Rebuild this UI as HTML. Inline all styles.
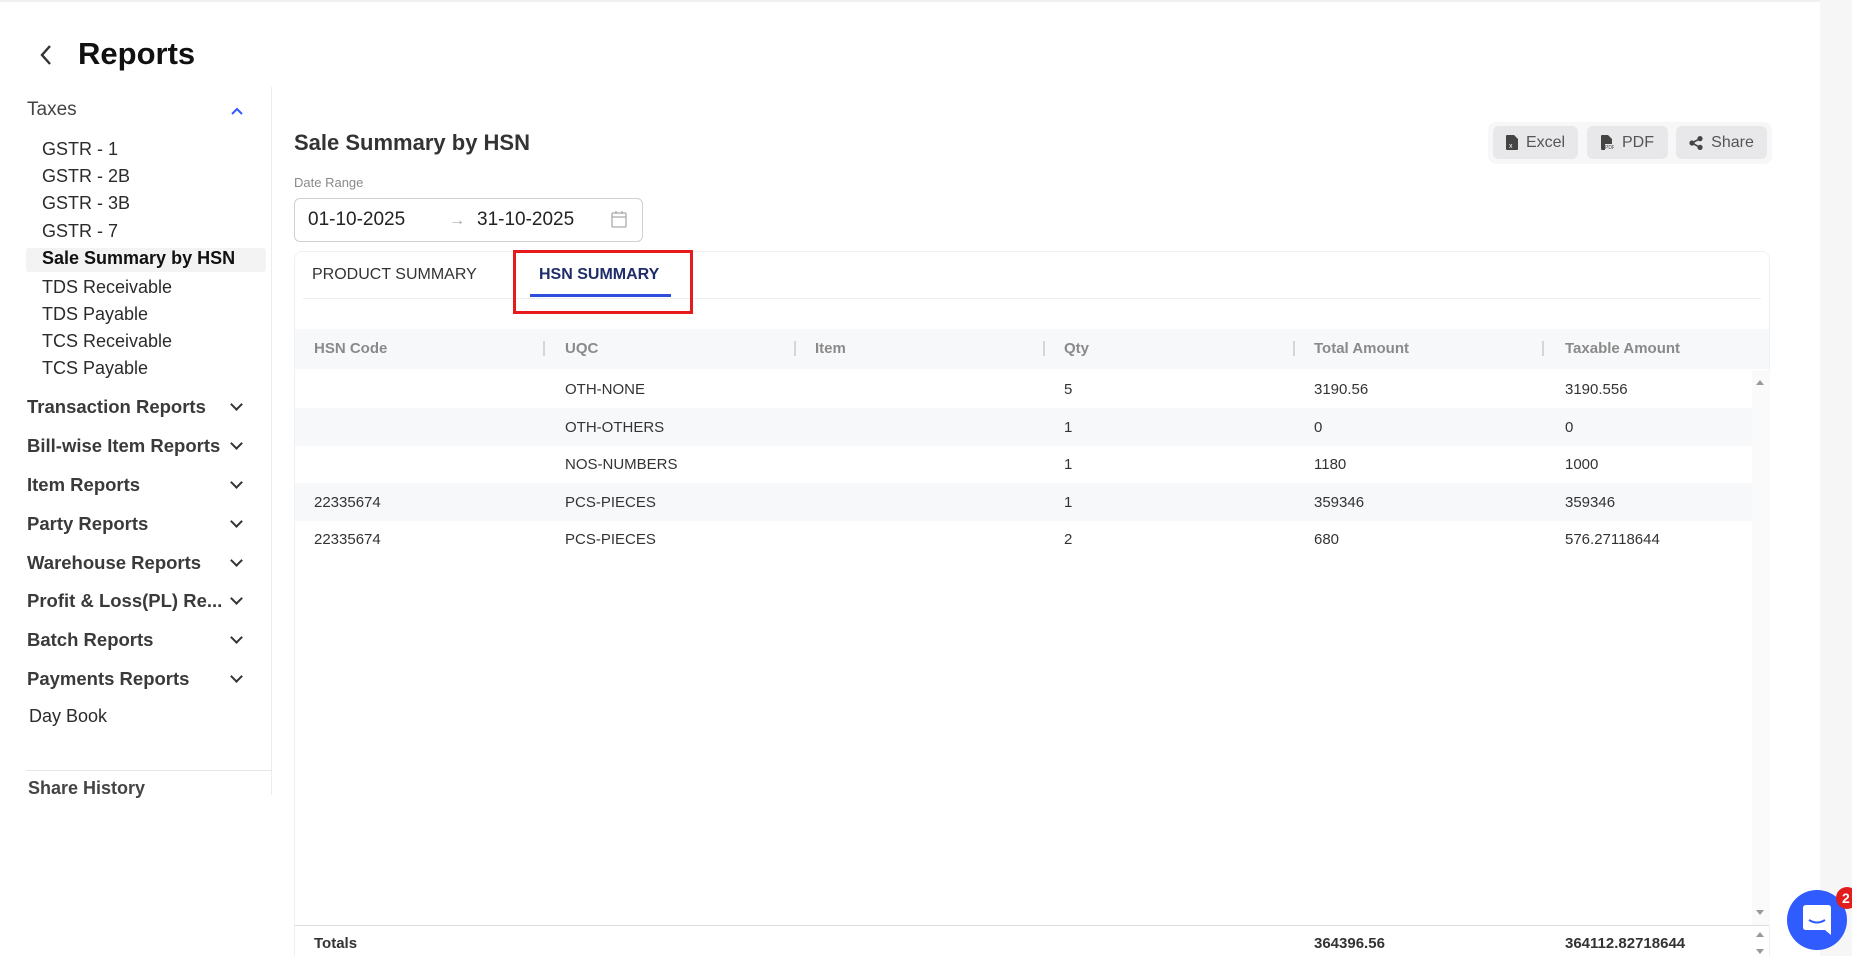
<!DOCTYPE html>
<html style="overflow:hidden;height:956px"><head><meta charset="utf-8"><style>
*{box-sizing:border-box;margin:0;padding:0}
body{width:1852px;height:956px;overflow:hidden;background:#f6f6f7;font-family:"Liberation Sans",sans-serif;color:#333;position:relative}
.page{position:absolute;left:0;top:0;width:1820px;height:956px;background:#fff;border-top:2px solid #f0f0f2;overflow:hidden}
.a{position:absolute;white-space:nowrap}
.sub{font-size:18px;color:#2b2b2b;left:42px}
.grp{font-size:18.5px;font-weight:bold;color:#3a3a3a;left:27px}
.chev{position:absolute;left:232px;width:9px;height:9px;border-right:2px solid #333;border-bottom:2px solid #333;transform:rotate(45deg)}
.th{font-size:15px;font-weight:bold;color:#8a8a8a;top:338px}
.sep{position:absolute;top:339px;width:2px;height:15px;background:#d6d6d6}
.td{font-size:15px;color:#333}
.btn{position:absolute;top:124px;height:33px;background:#e8e8eb;border-radius:6px;font-size:16px;color:#555;display:flex;align-items:center;justify-content:center;gap:8px}
</style></head><body>
<div class="page">
<svg class="a" style="left:38px;top:42px" width="16" height="22" viewBox="0 0 16 22"><path d="M12 2 L4 11 L12 20" fill="none" stroke="#333" stroke-width="2.4"/></svg>
<div class="a" style="left:78px;top:34px;font-size:31px;font-weight:bold;color:#111">Reports</div>

<div class="a" style="left:27px;top:97px;font-size:19px;color:#444">Taxes</div>
<svg class="a" style="left:230px;top:104px" width="14" height="10" viewBox="0 0 14 10"><path d="M2 8 L7 3 L12 8" fill="none" stroke="#2f5bff" stroke-width="2"/></svg>
<div class="a sub" style="top:137px">GSTR - 1</div>
<div class="a sub" style="top:164px">GSTR - 2B</div>
<div class="a sub" style="top:191px">GSTR - 3B</div>
<div class="a sub" style="top:219px">GSTR - 7</div>
<div class="a" style="left:26px;top:246px;width:240px;height:24px;background:#f3f3f4;border-radius:3px"></div>
<div class="a sub" style="top:246px;font-weight:bold;color:#111">Sale Summary by HSN</div>
<div class="a sub" style="top:275px">TDS Receivable</div>
<div class="a sub" style="top:302px">TDS Payable</div>
<div class="a sub" style="top:329px">TCS Receivable</div>
<div class="a sub" style="top:356px">TCS Payable</div>
<div class="a grp" style="top:394px">Transaction Reports</div><div class="chev" style="top:398px"></div>
<div class="a grp" style="top:433px">Bill-wise Item Reports</div><div class="chev" style="top:437px"></div>
<div class="a grp" style="top:472px">Item Reports</div><div class="chev" style="top:476px"></div>
<div class="a grp" style="top:511px">Party Reports</div><div class="chev" style="top:515px"></div>
<div class="a grp" style="top:550px">Warehouse Reports</div><div class="chev" style="top:554px"></div>
<div class="a grp" style="top:588px">Profit &amp; Loss(PL) Re...</div><div class="chev" style="top:592px"></div>
<div class="a grp" style="top:627px">Batch Reports</div><div class="chev" style="top:631px"></div>
<div class="a grp" style="top:666px">Payments Reports</div><div class="chev" style="top:670px"></div>
<div class="a" style="left:29px;top:704px;font-size:18px;color:#2b2b2b">Day Book</div>
<div class="a" style="left:271px;top:85px;width:1px;height:708px;background:#ececec"></div>
<div class="a" style="left:26px;top:768px;width:246px;height:1px;background:#e6e6e6"></div>
<div class="a" style="left:28px;top:776px;font-size:18px;font-weight:bold;color:#444">Share History</div>

<div class="a" style="left:294px;top:128px;font-size:22px;font-weight:bold;color:#333">Sale Summary by HSN</div>
<div class="a" style="left:1488px;top:120px;width:284px;height:42px;background:#f7f7f8;border-radius:8px"></div>
<div class="btn" style="left:1493px;width:85px"><svg width="12" height="15" viewBox="0 0 12 15"><path d="M0 1 Q0 0 1 0 H8 L12 4 V14 Q12 15 11 15 H1 Q0 15 0 14Z" fill="#444"/><text x="3" y="13" font-size="7" fill="#fff" font-family="Liberation Sans">x</text></svg>Excel</div>
<div class="btn" style="left:1587px;width:81px"><svg width="13" height="15" viewBox="0 0 13 15"><path d="M0 1 Q0 0 1 0 H7 L11 4 V9 H4 V15 H1 Q0 15 0 14Z" fill="#444"/><text x="4" y="14" font-size="5" fill="#444" font-family="Liberation Sans">PDF</text></svg>PDF</div>
<div class="btn" style="left:1676px;width:91px"><svg width="14" height="14" viewBox="0 0 14 14"><circle cx="3" cy="7" r="2.6" fill="#444"/><circle cx="11" cy="2.6" r="2.6" fill="#444"/><circle cx="11" cy="11.4" r="2.6" fill="#444"/><path d="M3 7 L11 2.6 M3 7 L11 11.4" stroke="#444" stroke-width="1.6"/></svg>Share</div>

<div class="a" style="left:294px;top:173px;font-size:13px;color:#8a8a8a">Date Range</div>
<div class="a" style="left:294px;top:196px;width:349px;height:44px;border:1px solid #cfcfd4;border-radius:6px"></div>
<div class="a" style="left:308px;top:207px;font-size:19px;color:#222">01-10-2025</div>
<div class="a" style="left:449px;top:210px;font-size:16px;color:#aaa">→</div>
<div class="a" style="left:477px;top:207px;font-size:19px;color:#222">31-10-2025</div>
<svg class="a" style="left:611px;top:208px" width="16" height="18" viewBox="0 0 16 18"><rect x="1" y="3" width="14" height="14" rx="1" fill="none" stroke="#aaa" stroke-width="1.3"/><path d="M1 7 H15 M5 1 V4 M11 1 V4" stroke="#aaa" stroke-width="1.3"/></svg>

<div class="a" style="left:294px;top:249px;width:1476px;height:707px;border:1px solid #f0f0f2;border-bottom:none;border-radius:8px 8px 0 0"></div>
<div class="a" style="left:303px;top:296px;width:1458px;height:1px;background:#eeeef0"></div>
<div class="a" style="left:312px;top:264px;font-size:16px;color:#333">PRODUCT SUMMARY</div>
<div class="a" style="left:539px;top:264px;font-size:16px;font-weight:bold;color:#1f2d6b">HSN SUMMARY</div>
<div class="a" style="left:530px;top:292px;width:141px;height:3px;background:#2f4ee0"></div>
<div class="a" style="left:513px;top:248px;width:180px;height:64px;border:3px solid #e61b1b"></div>

<div class="a" style="left:295px;top:327px;width:1474px;height:40px;background:#f7f8fa"></div>
<div class="a th" style="left:314px">HSN Code</div><div class="sep" style="left:543px"></div>
<div class="a th" style="left:565px">UQC</div><div class="sep" style="left:794px"></div>
<div class="a th" style="left:815px">Item</div><div class="sep" style="left:1043px"></div>
<div class="a th" style="left:1064px">Qty</div><div class="sep" style="left:1293px"></div>
<div class="a th" style="left:1314px">Total Amount</div><div class="sep" style="left:1542px"></div>
<div class="a th" style="left:1565px">Taxable Amount</div>

<div class="a" style="left:295px;top:406px;width:1457px;height:38px;background:#f7f8fa"></div>
<div class="a" style="left:295px;top:481px;width:1457px;height:38px;background:#f7f8fa"></div>
<div class="a" style="left:1752px;top:368px;width:18px;height:556px;background:#fafafa"></div>
<svg class="a" style="left:1754px;top:375px" width="12" height="10"><path d="M2 8 L6 3 L10 8Z" fill="#999"/></svg>
<svg class="a" style="left:1754px;top:906px" width="12" height="10"><path d="M2 2 L6 7 L10 2Z" fill="#999"/></svg>

<div class="a td" style="left:565px;top:379px">OTH-NONE</div><div class="a td" style="left:1064px;top:379px">5</div><div class="a td" style="left:1314px;top:379px">3190.56</div><div class="a td" style="left:1565px;top:379px">3190.556</div>
<div class="a td" style="left:565px;top:417px">OTH-OTHERS</div><div class="a td" style="left:1064px;top:417px">1</div><div class="a td" style="left:1314px;top:417px">0</div><div class="a td" style="left:1565px;top:417px">0</div>
<div class="a td" style="left:565px;top:454px">NOS-NUMBERS</div><div class="a td" style="left:1064px;top:454px">1</div><div class="a td" style="left:1314px;top:454px">1180</div><div class="a td" style="left:1565px;top:454px">1000</div>
<div class="a td" style="left:314px;top:492px">22335674</div><div class="a td" style="left:565px;top:492px">PCS-PIECES</div><div class="a td" style="left:1064px;top:492px">1</div><div class="a td" style="left:1314px;top:492px">359346</div><div class="a td" style="left:1565px;top:492px">359346</div>
<div class="a td" style="left:314px;top:529px">22335674</div><div class="a td" style="left:565px;top:529px">PCS-PIECES</div><div class="a td" style="left:1064px;top:529px">2</div><div class="a td" style="left:1314px;top:529px">680</div><div class="a td" style="left:1565px;top:529px">576.27118644</div>

<div class="a" style="left:295px;top:923px;width:1474px;height:1px;background:#ddd"></div>
<div class="a td" style="left:314px;top:933px;font-weight:bold">Totals</div>
<div class="a td" style="left:1314px;top:933px;font-weight:bold">364396.56</div>
<div class="a td" style="left:1565px;top:933px;font-weight:bold">364112.82718644</div>
<svg class="a" style="left:1754px;top:927px" width="12" height="29"><path d="M2 8 L6 3 L10 8Z M2 20 L6 25 L10 20Z" fill="#999"/></svg>
</div>
<div class="a" style="left:1787px;top:890px;width:60px;height:60px;border-radius:50%;background:#2f5bff"></div>
<svg class="a" style="left:1803px;top:905px" width="28" height="30" viewBox="0 0 28 30"><path d="M3 0 H25 Q28 0 28 3 V30 L22 25 H3 Q0 25 0 22 V3 Q0 0 3 0Z" fill="#fff"/><path d="M6 15 Q14 20 22 15" fill="none" stroke="#2f5bff" stroke-width="2"/></svg>
<div class="a" style="left:1836px;top:887px;width:22px;height:22px;border-radius:50%;background:#e21d1d;color:#fff;font-size:14px;font-weight:bold;padding-left:6px;line-height:22px">2</div>
</body></html>
